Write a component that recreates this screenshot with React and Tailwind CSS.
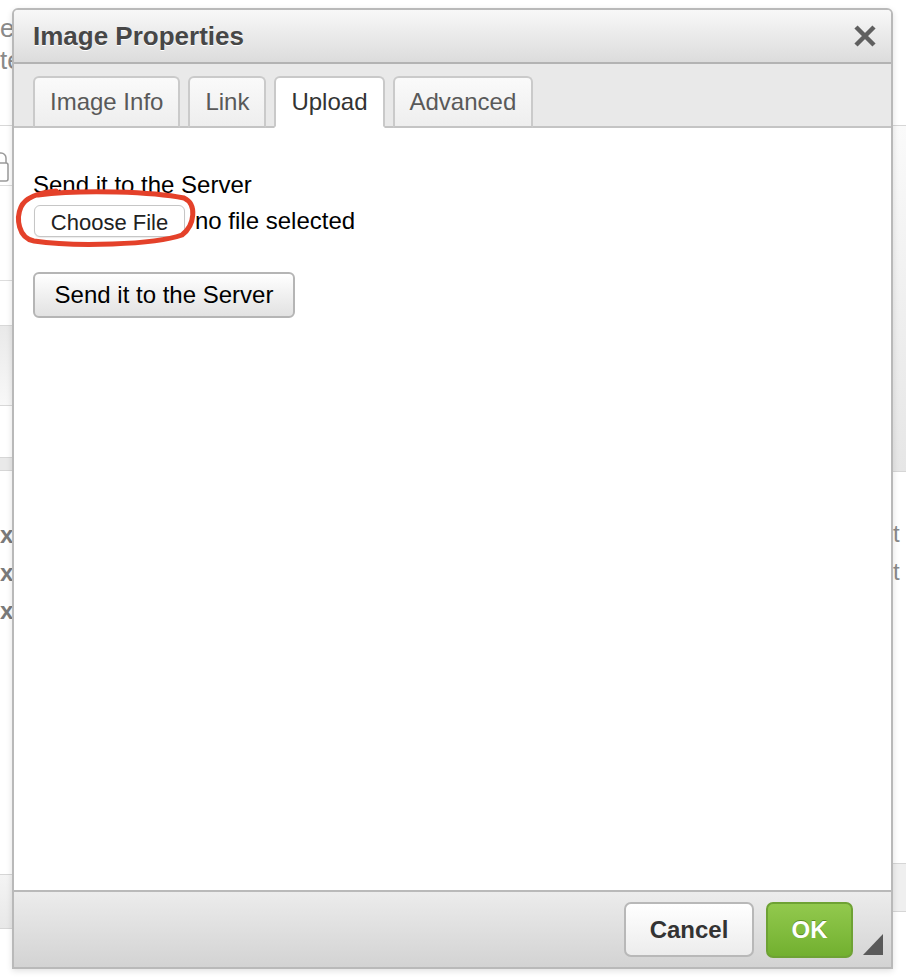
import React from "react";

const LockIcon = () => (
  <svg width="16" height="32" viewBox="0 0 16 32" className="-ml-[7px]">
    <path d="M3 12 V7 a5 5 0 0 1 10 0 V12" fill="none" stroke="#9a9a9a" strokeWidth="1.5" />
    <rect x="1" y="12" width="14" height="18" rx="2" fill="none" stroke="#9a9a9a" strokeWidth="1.5" />
  </svg>
);

const Tab = ({ label, active }) => (
  <div
    className={
      active
        ? "h-[52px] -mb-[2px] flex items-center px-[15px] border-2 border-[#c9c9c9] border-b-white rounded-t-[6px] bg-white text-[#333] text-[24px] leading-[28px]"
        : "h-[52px] -mb-[2px] flex items-center px-[15px] border-2 border-[#cacaca] border-b-[#c4c4c4] rounded-t-[6px] bg-gradient-to-b from-[#fafafa] to-[#eeeeee] text-[#595959] text-[24px] leading-[28px]"
    }
  >
    {label}
  </div>
);

const App = () => {
  return (
    <div className="relative w-[906px] h-[980px] overflow-hidden bg-white font-['Liberation_Sans',Arial,sans-serif]">
      {/* page behind the dialog */}
      <div className="flex h-full">
        <div className="w-[12px] shrink-0 flex flex-col whitespace-nowrap">
          <div className="h-[125px] pt-[12px] text-[26px] leading-[32px] text-[#8a8a8a]">
            <div>e</div>
            <div>text</div>
          </div>
          <div className="h-[60px] border-t border-[#d8d8d8] flex items-end pb-[2px] overflow-hidden">
            <LockIcon />
          </div>
          <div className="h-[95px] border-t border-[#dddddd]" />
          <div className="h-[45px] border-t border-[#dddddd]" />
          <div className="h-[80px] border-t border-[#d8d8d8] bg-gradient-to-b from-[#e9e9e9] to-[#f8f8f8]" />
          <div className="h-[52px] border-t border-[#d8d8d8]" />
          <div className="h-[14px] border-y border-[#d6d6d6] bg-[#e9e9e9]" />
          <div className="h-[403px] pt-[45px] text-[24px] leading-[38px] font-bold text-[#7a7a7a]">
            <div>xample</div>
            <div>xample</div>
            <div>xample</div>
          </div>
          <div className="h-[55px] border-y border-[#d6d6d6] bg-gradient-to-b from-[#f4f4f4] to-[#e8e8e8]" />
        </div>

        <div className="flex-1" />

        <div className="w-[13px] shrink-0 overflow-hidden flex flex-col whitespace-nowrap">
          <div className="h-[125px]" />
          <div className="h-[347px] border-y border-[#d6d6d6] bg-gradient-to-b from-[#fafafa] to-[#e6e6e6]" />
          <div className="h-[391px] pt-[43px] text-[24px] leading-[38px] text-[#8a8a8a]">
            <div>t</div>
            <div>t</div>
          </div>
          <div className="h-[49px] border-y border-[#d6d6d6] bg-[#efefef]" />
        </div>
      </div>

      {/* IMAGE PROPERTIES DIALOG */}
      <div className="absolute left-[12px] top-[8px] w-[881px] h-[961px] flex flex-col border-2 border-[#b9b9b9] rounded-t-[6px] bg-white shadow-[0_2px_6px_rgba(0,0,0,0.12)]">
        {/* Title bar */}
        <div className="h-[54px] shrink-0 flex items-center justify-between pl-[19px] pr-[15px] border-b-2 border-[#b3b3b3] rounded-t-[4px] bg-gradient-to-b from-[#f8f8f8] to-[#dcdcdc]">
          <h2 className="text-[26px] leading-[30px] font-bold text-[#474747] [text-shadow:0_1px_0_#fff]">
            Image Properties
          </h2>
          <svg width="22" height="22" viewBox="0 0 22 22">
            <path d="M2 2 L20 20 M20 2 L2 20" stroke="#5f5f5f" strokeWidth="4.5" />
          </svg>
        </div>

        {/* Tabs */}
        <div className="h-[64px] shrink-0 flex items-end gap-[8px] pl-[19px] bg-[#e9e9e9] border-b-2 border-[#c4c4c4]">
          <Tab label="Image Info" />
          <Tab label="Link" />
          <Tab label="Upload" active />
          <Tab label="Advanced" />
        </div>

        {/* Body */}
        <div className="relative flex-1 bg-white pl-[19px] pt-[43px]">
          <div className="text-[24px] leading-[28px] text-black">Send it to the Server</div>
          <div className="mt-[6px] flex items-center">
            <button className="ml-[1px] h-[32px] w-[151px] rounded-[6px] border border-[#c6c6c6] bg-white text-[22px] text-[#222] shadow-[0_1px_1px_rgba(0,0,0,0.08)]">
              Choose File
            </button>
            <span className="ml-[10px] text-[24px] leading-[28px] text-black">no file selected</span>
          </div>
          <button className="mt-[35px] h-[46px] w-[262px] rounded-[6px] border-2 border-[#b5b5b5] bg-gradient-to-b from-white to-[#e2e2e2] text-[24px] text-black">
            Send it to the Server
          </button>

          {/* hand drawn red circle */}
          <svg
            width="190"
            height="72"
            viewBox="0 0 190 72"
            className="absolute left-0 top-[55px] pointer-events-none"
          >
            <path
              d="M24 12 C70 6, 140 9, 170 15 C183 21, 181 42, 168 52 C140 62, 60 64, 20 58 C4 55, 2 35, 7 24 C11 15, 22 10, 42 8"
              fill="none"
              stroke="#e4412a"
              strokeWidth="5"
              strokeLinecap="round"
            />
          </svg>
        </div>

        {/* Footer */}
        <div className="relative h-[77px] shrink-0 flex items-center justify-end gap-[12px] pr-[38px] border-t-2 border-[#b9b9b9] bg-gradient-to-b from-[#ececec] to-[#d3d3d3]">
          <button className="h-[55px] w-[130px] rounded-[7px] border-2 border-[#b8b8b8] bg-gradient-to-b from-white to-[#ececec] text-[24px] font-bold text-[#333]">
            Cancel
          </button>
          <button className="h-[56px] w-[87px] rounded-[7px] border-2 border-[#6ea234] bg-gradient-to-b from-[#92c94d] to-[#72b02f] text-[24px] font-bold text-white [text-shadow:0_-1px_0_#5b8c25]">
            OK
          </button>
          <svg width="20" height="21" viewBox="0 0 20 21" className="absolute right-[8px] bottom-[12px]">
            <polygon points="20,0 20,21 0,21" fill="#5a5a5a" />
          </svg>
        </div>
      </div>
    </div>
  );
};

export default App;
